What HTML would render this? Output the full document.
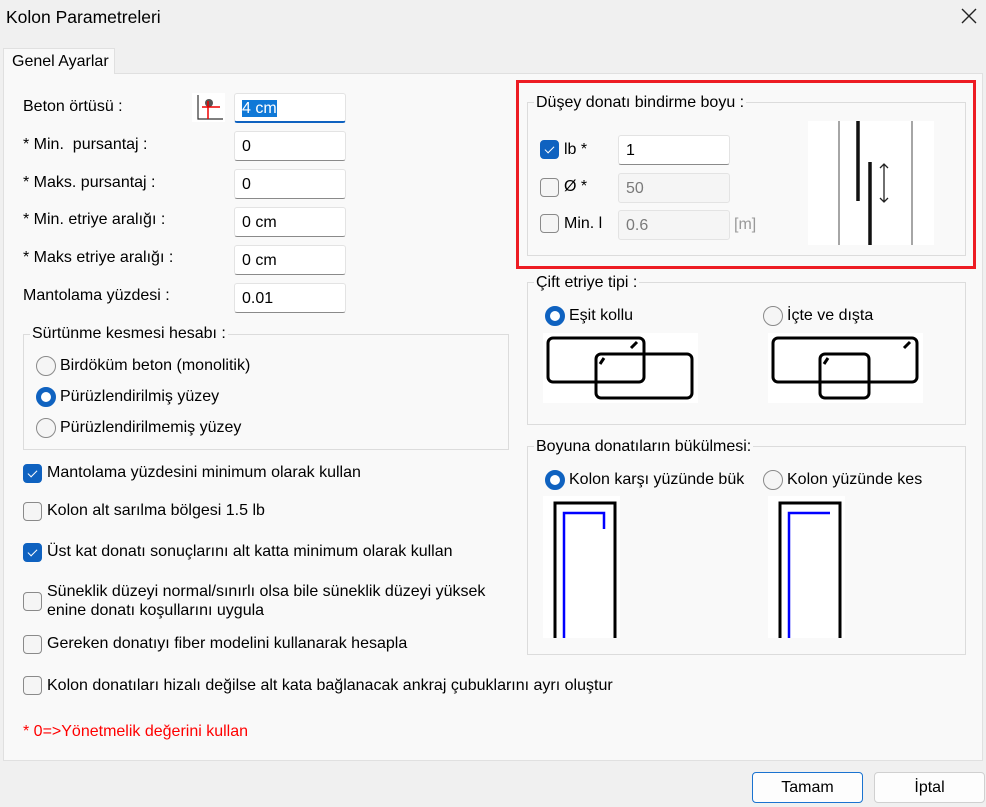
<!DOCTYPE html>
<html><head><meta charset="utf-8"><style>
*{box-sizing:border-box;margin:0;padding:0}
body{width:986px;height:807px;background:#f0f0f0;font-family:"Liberation Sans",sans-serif;font-size:16px;color:#000;position:relative;overflow:hidden}
.a{position:absolute;white-space:nowrap}
.t{line-height:20px}
.in{position:absolute;background:#fff;border:1px solid #e3e3e3;border-bottom:1px solid #8a8a8a;border-radius:3px;height:30px;padding:5px 0 0 7px;line-height:19px}
.dis{background:#f5f5f5;color:#7a7a7a;border-bottom-color:#e3e3e3}
.grp{position:absolute;border:1px solid #dcdcdc}
.lg{position:absolute;background:#f9f9f9;padding:0 2px;line-height:20px;white-space:nowrap}
.cb{position:absolute;width:19px;height:19px;border:1px solid #8a8a8a;border-radius:4px;background:#f5f5f5}
.cb.on{background:#0f62c0;border-color:#0f62c0}
.cb.on:after{content:"";position:absolute;left:6px;top:3px;width:4px;height:8px;border:solid #fff;border-width:0 1px 1px 0;transform:rotate(45deg)}
.rb{position:absolute;width:20px;height:20px;border:1px solid #8a8a8a;border-radius:50%;background:#f5f5f5}
.rb.on{background:#fff;border:5px solid #0f62c0}
.btn{position:absolute;height:31px;border:1px solid #d0d0d0;border-radius:4px;background:#fdfdfd;text-align:center;line-height:29px}
</style></head><body>
<div class="a" style="left:6px;top:6px;font-size:17.5px;line-height:22px">Kolon Parametreleri</div>
<svg class="a" style="left:960px;top:7px" width="18" height="18"><path d="M2 2L16 16M16 2L2 16" stroke="#222" stroke-width="1.4"/></svg>
<div class="a" style="left:3px;top:73px;width:980px;height:688px;background:#f9f9f9;border:1px solid #e0e0e0"></div>
<div class="a" style="left:3px;top:48px;width:112px;height:26px;background:#f9f9f9;border:1px solid #e0e0e0;border-bottom:none;padding:3px 0 0 8px;line-height:20px">Genel Ayarlar</div>

<div class="a t" style="left:23px;top:97px">Beton örtüsü :</div>
<div class="a t" style="left:23px;top:135px">* Min.&nbsp; pursantaj :</div>
<div class="a t" style="left:23px;top:173px">* Maks. pursantaj :</div>
<div class="a t" style="left:23px;top:210px">* Min. etriye aralığı :</div>
<div class="a t" style="left:23px;top:248px">* Maks etriye aralığı :</div>
<div class="a t" style="left:23px;top:286px">Mantolama yüzdesi :</div>
<svg class="a" style="left:192px;top:93px" width="33" height="29"><rect width="33" height="29" fill="#fff"/><path d="M6 2V26H31" stroke="#333" stroke-width="1.2" fill="none"/><circle cx="17" cy="10" r="4" fill="#555"/><path d="M16 8V26M10 14H28" stroke="#e00" stroke-width="1.5"/></svg>
<div class="in" style="left:234px;top:93px;width:112px;border-bottom:2px solid #0f62c0"><span style="background:#0f78d7;color:#fff">4 cm</span></div>
<div class="in" style="left:234px;top:131px;width:112px">0</div>
<div class="in" style="left:234px;top:169px;width:112px">0</div>
<div class="in" style="left:234px;top:207px;width:112px">0 cm</div>
<div class="in" style="left:234px;top:245px;width:112px">0 cm</div>
<div class="in" style="left:234px;top:283px;width:112px">0.01</div>

<div class="grp" style="left:23px;top:334px;width:486px;height:116px"></div>
<div class="lg" style="left:30px;top:324px">Sürtünme kesmesi hesabı :</div>
<div class="rb" style="left:36px;top:356px"></div><div class="a t" style="left:60px;top:356px">Birdöküm beton (monolitik)</div>
<div class="rb on" style="left:36px;top:387px"></div><div class="a t" style="left:60px;top:387px">Pürüzlendirilmiş yüzey</div>
<div class="rb" style="left:36px;top:418px"></div><div class="a t" style="left:60px;top:418px">Pürüzlendirilmemiş yüzey</div>

<div class="cb on" style="left:23px;top:464px"></div><div class="a t" style="left:47px;top:463px">Mantolama yüzdesini minimum olarak kullan</div>
<div class="cb" style="left:23px;top:502px"></div><div class="a t" style="left:47px;top:501px">Kolon alt sarılma bölgesi 1.5 lb</div>
<div class="cb on" style="left:23px;top:543px"></div><div class="a t" style="left:47px;top:542px">Üst kat donatı sonuçlarını alt katta minimum olarak kullan</div>
<div class="cb" style="left:23px;top:592px"></div><div class="a" style="left:47px;top:582px;line-height:19px">Süneklik düzeyi normal/sınırlı olsa bile süneklik düzeyi yüksek<br>enine donatı koşullarını uygula</div>
<div class="cb" style="left:23px;top:635px"></div><div class="a t" style="left:47px;top:634px">Gereken donatıyı fiber modelini kullanarak hesapla</div>
<div class="cb" style="left:23px;top:676px"></div><div class="a t" style="left:47px;top:676px">Kolon donatıları hizalı değilse alt kata bağlanacak ankraj çubuklarını ayrı oluştur</div>
<div class="a t" style="left:23px;top:722px;color:#f00">* 0=&gt;Yönetmelik değerini kullan</div>

<div class="a" style="left:516px;top:80px;width:460px;height:189px;border:3px solid #ed1c24"></div>
<div class="grp" style="left:527px;top:102px;width:439px;height:154px"></div>
<div class="lg" style="left:534px;top:93px">Düşey donatı bindirme boyu :</div>
<div class="cb on" style="left:540px;top:140px"></div><div class="a t" style="left:564px;top:140px">lb *</div>
<div class="cb" style="left:540px;top:178px"></div><div class="a t" style="left:564px;top:177px">Ø *</div>
<div class="cb" style="left:540px;top:214px"></div><div class="a t" style="left:564px;top:214px">Min. l</div>
<div class="in" style="left:618px;top:135px;width:112px">1</div>
<div class="in dis" style="left:618px;top:173px;width:112px">50</div>
<div class="in dis" style="left:618px;top:210px;width:112px">0.6</div>
<div class="a t" style="left:734px;top:215px;color:#999">[m]</div>
<svg class="a" style="left:808px;top:121px" width="126" height="124"><rect width="126" height="124" fill="#fff"/><path d="M31 0V124M104 0V124" stroke="#888" stroke-width="1.5"/><path d="M50 0V80M62 41V124" stroke="#111" stroke-width="3.5"/><path d="M76 43V81M72 47L76 43L80 47M72 77L76 81L80 77" stroke="#222" stroke-width="1.3" fill="none"/></svg>

<div class="grp" style="left:527px;top:282px;width:439px;height:143px"></div>
<div class="lg" style="left:534px;top:273px">Çift etriye tipi :</div>
<div class="rb on" style="left:545px;top:306px"></div><div class="a t" style="left:569px;top:306px">Eşit kollu</div>
<div class="rb" style="left:763px;top:306px"></div><div class="a t" style="left:787px;top:306px">İçte ve dışta</div>
<svg class="a" style="left:543px;top:333px" width="155" height="70"><rect width="155" height="70" fill="#fff"/><rect x="5" y="5" width="96" height="44" rx="5" fill="none" stroke="#000" stroke-width="3"/><rect x="53" y="21" width="96" height="44" rx="5" fill="none" stroke="#000" stroke-width="3"/><path d="M94 9L88 15M61 25L57 31" stroke="#000" stroke-width="3"/></svg>
<svg class="a" style="left:768px;top:333px" width="155" height="70"><rect width="155" height="70" fill="#fff"/><rect x="5" y="5" width="144" height="44" rx="5" fill="none" stroke="#000" stroke-width="3"/><rect x="52" y="21" width="49" height="44" rx="5" fill="none" stroke="#000" stroke-width="3"/><path d="M142 9L136 15M60 25L56 31" stroke="#000" stroke-width="3"/></svg>

<div class="grp" style="left:527px;top:446px;width:439px;height:209px"></div>
<div class="lg" style="left:534px;top:437px">Boyuna donatıların bükülmesi:</div>
<div class="rb on" style="left:545px;top:470px"></div><div class="a t" style="left:569px;top:470px">Kolon karşı yüzünde bük</div>
<div class="rb" style="left:763px;top:470px"></div><div class="a t" style="left:787px;top:470px">Kolon yüzünde kes</div>
<svg class="a" style="left:543px;top:496px" width="77" height="142"><rect width="77" height="142" fill="#fff"/><path d="M12 142V7H72V142" stroke="#000" stroke-width="3" fill="none"/><path d="M21 142V17H61V33" stroke="#00f" stroke-width="2.5" fill="none"/></svg>
<svg class="a" style="left:768px;top:496px" width="77" height="142"><rect width="77" height="142" fill="#fff"/><path d="M12 142V7H72V142" stroke="#000" stroke-width="3" fill="none"/><path d="M21 142V17H62" stroke="#00f" stroke-width="2.5" fill="none"/></svg>

<div class="btn" style="left:752px;top:772px;width:111px;border-color:#1a73d0">Tamam</div>
<div class="btn" style="left:874px;top:772px;width:111px">İptal</div>
</body></html>
